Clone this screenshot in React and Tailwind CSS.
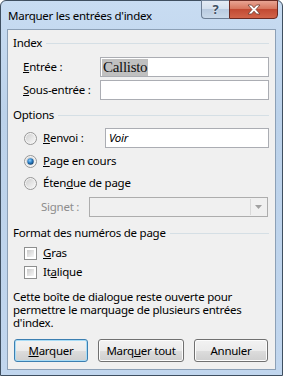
import React from "react";

const FONT = {
  fontFamily: '"Segoe UI", "Noto Sans", "Liberation Sans", sans-serif',
  fontSize: "11.5px",
  letterSpacing: "-0.25px",
};

const Radio = ({ checked }) => (
  <svg width="13" height="13" viewBox="0 0 13 13" className="shrink-0">
    <defs>
      <linearGradient id="rg" x1="0" y1="0" x2="1" y2="1">
        <stop offset="0" stopColor="#cfcfcf" />
        <stop offset="1" stopColor="#f8f8f8" />
      </linearGradient>
      <radialGradient id="dot" cx="0.4" cy="0.35" r="0.7">
        <stop offset="0" stopColor="#8fd0ff" />
        <stop offset="0.5" stopColor="#2b7fc6" />
        <stop offset="1" stopColor="#103a64" />
      </radialGradient>
    </defs>
    <circle cx="6.5" cy="6.5" r="6" fill="#f4f4f4" stroke="#969696" />
    <circle cx="6.5" cy="6.5" r="4.5" fill="url(#rg)" />
    {checked && <circle cx="6.5" cy="6.5" r="3.2" fill="url(#dot)" />}
  </svg>
);

const Check = () => (
  <div className="w-[13px] h-[13px] shrink-0 border border-[#8e8f8f] bg-white p-[2px]">
    <div className="w-full h-full bg-gradient-to-br from-[#cbcbcb] to-[#f7f7f7]" />
  </div>
);

const Group = ({ title }) => (
  <div className="flex items-center h-[14px] pl-[5px] pr-[6px] gap-[4px]">
    <span className="leading-[14px] text-[#000]">{title}</span>
    <div className="flex-1 h-px bg-[#d5dfe5]" />
  </div>
);

const Btn = ({ children, def, w }) => (
  <button
    className={`${w} h-[23px] rounded-[3px] border ${
      def ? "border-[#3c7fb1] shadow-[inset_0_0_0_1px_#a8dcf6]" : "border-[#707070] shadow-[inset_0_0_0_1px_#fcfcfc]"
    } bg-[linear-gradient(#f2f2f2_0%,#ebebeb_50%,#dddddd_50%,#cfcfcf_100%)] leading-none text-black`}
    style={FONT}
  >
    {children}
  </button>
);

export default function App() {
  return (
    <div className="w-[283px] h-[376px] bg-white">
      <div
        className="w-[283px] h-[376px] flex flex-col rounded-t-[6px] border border-[#3f4f60] bg-[linear-gradient(#c8dcf2,#bcd2ea_30%,#c1d6ee)]"
        style={FONT}
      >
        {/* title bar */}
        <div className="h-[28px] flex items-start justify-between pl-[7px] pr-[4px] shrink-0">
          <span className="mt-[7px] leading-[16px] text-black">Marquer les entrées d'index</span>
          <div className="flex h-[19px] -mt-px">
            <div className="w-[28px] h-[19px] rounded-bl-[4px] border border-[#6d7f95] border-r-0 bg-[linear-gradient(#e4ecf5,#d4e0ee_45%,#b9cbe0_50%,#c9d9ea)] flex items-center justify-center">
              <span className="text-[13px] font-bold text-[#3d4f63] leading-none [text-shadow:0_0_2px_#fff]">?</span>
            </div>
            <div className="w-[49px] h-[19px] rounded-br-[4px] border border-[#6b2a22] bg-[linear-gradient(#e8a493,#d7775f_45%,#c24a33_50%,#d1644a)] flex items-center justify-center">
              <svg width="14" height="11" viewBox="0 0 14 11">
                <path d="M1 1h3.5L7 3.8 9.5 1H13L9 5.5 13 10H9.5L7 7.2 4.5 10H1L5 5.5z" fill="#fff" stroke="#6b3a30" strokeWidth="0.8" />
              </svg>
            </div>
          </div>
        </div>

        {/* client */}
        <div className="mx-[6px] h-[341px] border border-[#8ca0b6] bg-[#f0f0f0] flex flex-col text-black">
          <div className="mt-[6px]">
            <Group title="Index" />
          </div>
          <div className="mt-[7px] h-[20px] flex items-center pl-[15px] pr-[6px]">
            <span className="w-[77px]"><u>E</u>ntrée :</span>
            <div className="flex-1 h-[20px] border border-[#abadb3] bg-white flex items-center pl-[1px]">
              <span
                className="bg-[#c0c0c0] leading-[17px] px-px text-[#111]"
                style={{ fontFamily: '"Liberation Serif", "DejaVu Serif", serif', fontSize: 15, letterSpacing: "-0.3px" }}
              >
                Callisto
              </span>
            </div>
          </div>
          <div className="mt-[3px] h-[20px] flex items-center pl-[15px] pr-[6px]">
            <span className="w-[77px]"><u>S</u>ous-entrée :</span>
            <div className="flex-1 h-[20px] border border-[#abadb3] bg-white" />
          </div>

          <div className="mt-[8px]">
            <Group title="Options" />
          </div>
          <div className="mt-[6px] h-[20px] flex items-center pl-[16px] pr-[6px]">
            <Radio />
            <span className="ml-[6px] w-[62px]"><u>R</u>envoi :</span>
            <div className="flex-1 h-[20px] border border-[#abadb3] bg-white flex items-center pl-[3px] italic">
              Voir
            </div>
          </div>
          <div className="mt-[3px] h-[20px] flex items-center pl-[16px]">
            <Radio checked />
            <span className="ml-[6px]"><u>P</u>age en cours</span>
          </div>
          <div className="mt-[2px] h-[20px] flex items-center pl-[16px]">
            <Radio />
            <span className="ml-[6px]">Éten<u>d</u>ue de page</span>
          </div>
          <div className="mt-[4px] h-[20px] flex items-center pl-[33px] pr-[7px]">
            <span className="w-[48px] text-[#8d8d8d]">Signet :</span>
            <div className="flex-1 h-[20px] border border-[#adadad] bg-[#f0f0f0] flex justify-end p-px">
              <div className="w-[16px] h-full border-l border-[#d9d9d9] flex items-center justify-center">
                <svg width="7" height="4" viewBox="0 0 7 4">
                  <path d="M0 0h7L3.5 4z" fill="#a0a0a0" />
                </svg>
              </div>
            </div>
          </div>

          <div className="mt-[9px]">
            <Group title="Format des numéros de page" />
          </div>
          <div className="mt-[5px] h-[16px] flex items-center pl-[16px]">
            <Check />
            <span className="ml-[6px]"><u>G</u>ras</span>
          </div>
          <div className="mt-[3px] h-[16px] flex items-center pl-[16px]">
            <Check />
            <span className="ml-[6px]">It<u>a</u>lique</span>
          </div>

          <p className="mt-[10px] pl-[5px] pr-[30px] leading-[13px]">
            Cette boîte de dialogue reste ouverte pour permettre le marquage de plusieurs entrées d'index.
          </p>

          <div className="mt-[10px] flex pl-[6px] gap-[10px]">
            <Btn def w="w-[74px]">
              <u>M</u>arquer
            </Btn>
            <Btn w="w-[86px]">
              Marq<u>u</u>er tout
            </Btn>
            <Btn w="w-[74px]">Annuler</Btn>
          </div>
        </div>
      </div>
    </div>
  );
}
